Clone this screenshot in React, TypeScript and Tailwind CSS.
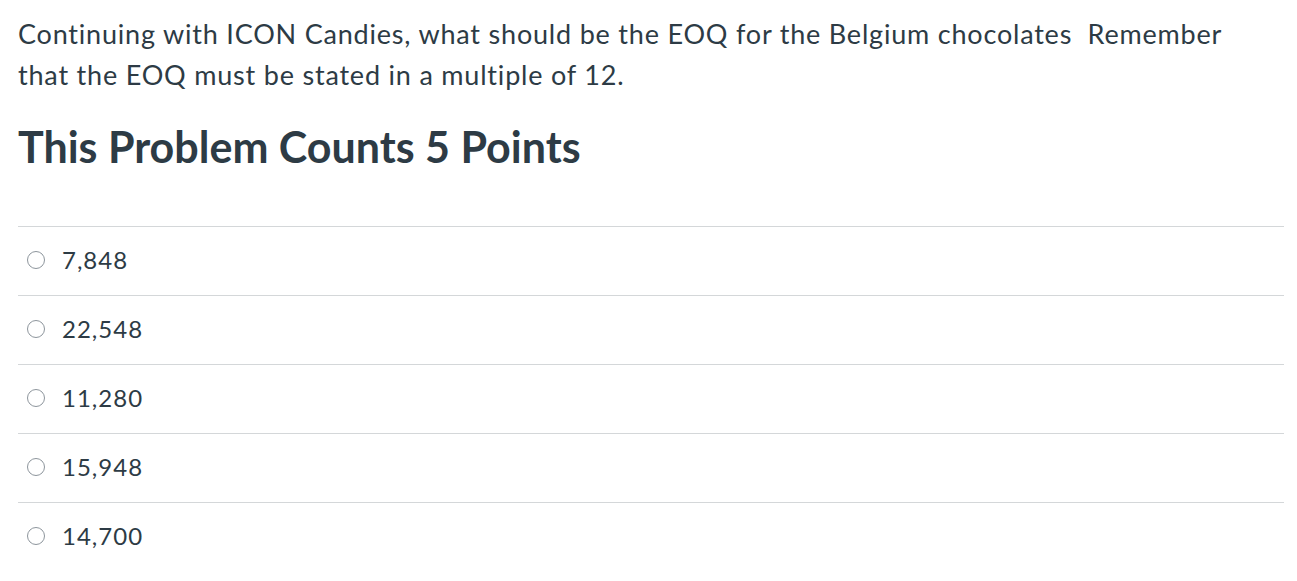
const options = ["7,848", "22,548", "11,280", "15,948", "14,700"];

const Radio = () => (
  <span className="inline-block w-[18px] h-[18px] rounded-full border border-[#8d959c] bg-white shrink-0" />
);

export default function App() {
  return (
    <div
      className="w-full h-[581px] bg-white pl-[18px] pr-[13px] text-[#2d3b45] overflow-hidden"
      style={{ fontFamily: "Lato, 'Open Sans', sans-serif" }}
    >
      <p className="pt-[13px] text-[27px] leading-[41px] tracking-[0.8px]">
        Continuing with ICON Candies, what should be the EOQ for the Belgium chocolates&nbsp; Remember
        <br />
        that the EOQ must be stated in a multiple of 12.
      </p>
      <h2 className="mt-[26px] text-[43px] leading-[52px] font-bold">This Problem Counts 5 Points</h2>

      <div className="mt-[53px]">
        {options.map((o) => (
          <div key={o} className="flex items-center gap-[17px] h-[69px] border-t border-[#d4d7d9] pl-[9px] pb-[3px]">
            <Radio />
            <span className="text-[24px] tracking-[1px]">{o}</span>
          </div>
        ))}
      </div>
    </div>
  );
}
